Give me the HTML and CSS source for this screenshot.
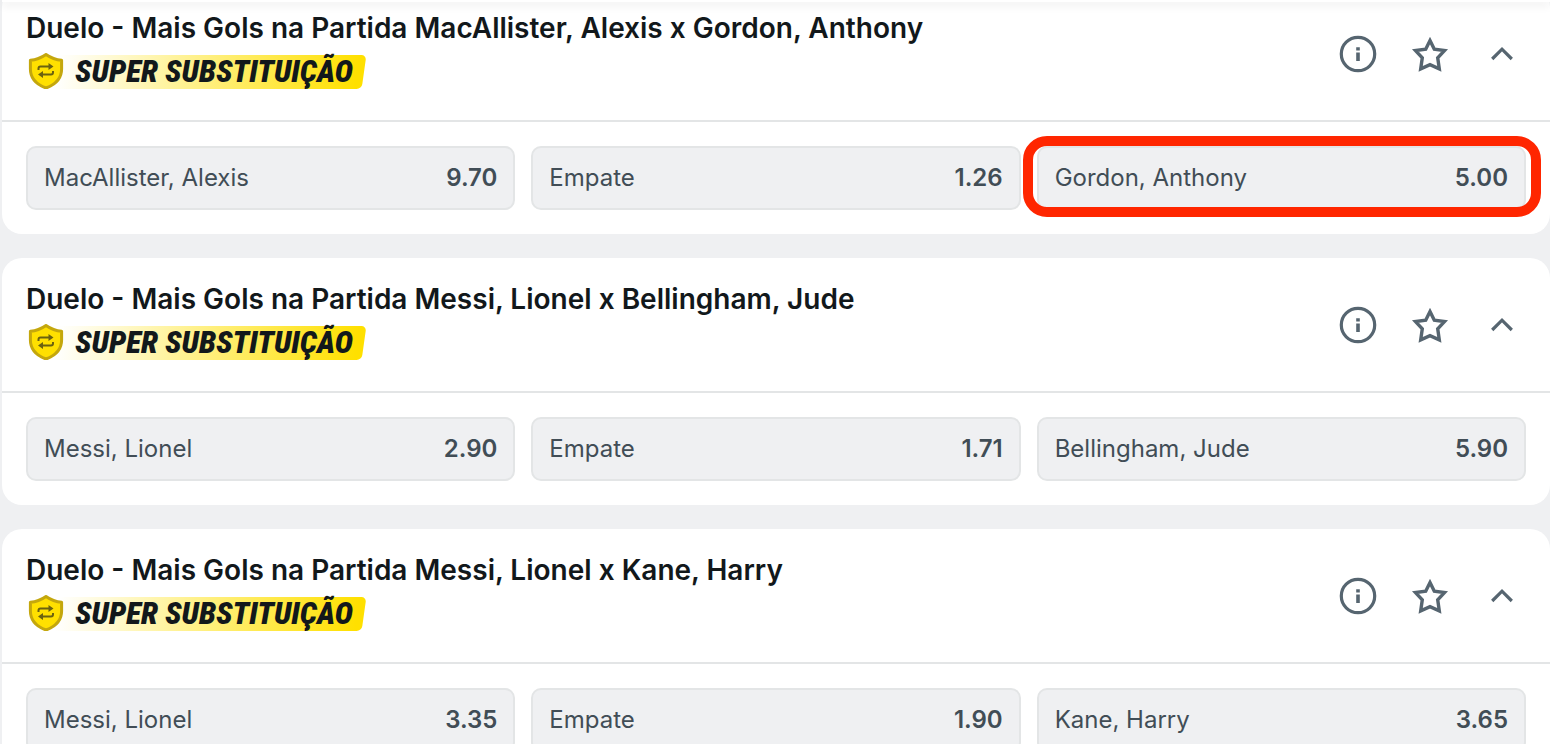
FILE: index.html
```
<!DOCTYPE html>
<html lang="pt-BR">
<head>
  <meta charset="UTF-8">
  <meta name="viewport" content="width=device-width, initial-scale=1.0">
  <title>Duelos - Super Substituição</title>
  <link rel="stylesheet" href="styles.css">
</head>
<body>
  <!-- shared icons -->
  <svg class="sprite" aria-hidden="true">
    <symbol id="icon-shield" viewBox="0 0 36 36">
      <path d="M18 1.500C14 4.300 8.500 6.800 2.400 7.200V16C2.400 25.500 8.500 31.500 18 35C27.500 31.500 33.600 25.500 33.600 16V7.200C27.500 6.800 22 4.300 18 1.500Z" fill="#ffe000" stroke="#c4a70d" stroke-width="3" stroke-linejoin="round"/>
      <path d="M10.500 17V15.500Q10.500 13.500 12.500 13.500H21M25 18V19.500Q25 21.500 23 21.500H14.500" fill="none" stroke="#6b6210" stroke-width="2"/>
      <path d="M20.500 10L25.500 13.500L20.500 17ZM15 18L10 21.500L15 25Z" fill="#6b6210"/>
    </symbol>
    <symbol id="icon-info" viewBox="0 0 40 40">
      <circle cx="20" cy="20" r="16.700" fill="none" stroke="#566570" stroke-width="3.200"/>
      <path d="M18.200 13.200H21.800V16.400H18.200ZM18.200 18.400H21.800V27H18.200Z" fill="#566570"/>
    </symbol>
    <symbol id="icon-star" viewBox="0 0 40 40">
      <path d="M20 6.500L24.300 15.300L34.500 16.600L27.700 23.800L29.300 34.800L20 30.600L10.700 34.800L12.300 23.800L5.500 16.600L15.700 15.300Z" fill="none" stroke="#566570" stroke-width="3.400"/>
    </symbol>
    <symbol id="icon-chevron" viewBox="0 0 40 40">
      <path d="M10.200 25L20 15.200L29.800 25" fill="none" stroke="#566570" stroke-width="3.200"/>
    </symbol>
  </svg>

  <div class="top-bar"></div>

  <main class="markets">
    <section class="card">
      <header class="card-header">
        <div class="card-info">
          <h2 class="card-title">Duelo - Mais Gols na Partida MacAllister, Alexis x Gordon, Anthony</h2>
          <div class="promo">
            <svg class="promo-icon"><use href="#icon-shield"/></svg>
            <span class="promo-text">SUPER SUBSTITUIÇÃO</span>
          </div>
        </div>
        <div class="actions">
          <button type="button" class="icon-btn" aria-label="Informações"><svg><use href="#icon-info"/></svg></button>
          <button type="button" class="icon-btn" aria-label="Favorito"><svg><use href="#icon-star"/></svg></button>
          <button type="button" class="icon-btn" aria-label="Recolher"><svg><use href="#icon-chevron"/></svg></button>
        </div>
      </header>
      <div class="odds">
        <button type="button" class="odd"><span>MacAllister, Alexis</span><span class="price">9.70</span></button>
        <button type="button" class="odd"><span>Empate</span><span class="price">1.26</span></button>
        <button type="button" class="odd highlighted"><span>Gordon, Anthony</span><span class="price">5.00</span></button>
      </div>
    </section>

    <section class="card">
      <header class="card-header">
        <div class="card-info">
          <h2 class="card-title">Duelo - Mais Gols na Partida Messi, Lionel x Bellingham, Jude</h2>
          <div class="promo">
            <svg class="promo-icon"><use href="#icon-shield"/></svg>
            <span class="promo-text">SUPER SUBSTITUIÇÃO</span>
          </div>
        </div>
        <div class="actions">
          <button type="button" class="icon-btn" aria-label="Informações"><svg><use href="#icon-info"/></svg></button>
          <button type="button" class="icon-btn" aria-label="Favorito"><svg><use href="#icon-star"/></svg></button>
          <button type="button" class="icon-btn" aria-label="Recolher"><svg><use href="#icon-chevron"/></svg></button>
        </div>
      </header>
      <div class="odds">
        <button type="button" class="odd"><span>Messi, Lionel</span><span class="price">2.90</span></button>
        <button type="button" class="odd"><span>Empate</span><span class="price">1.71</span></button>
        <button type="button" class="odd"><span>Bellingham, Jude</span><span class="price">5.90</span></button>
      </div>
    </section>

    <section class="card">
      <header class="card-header">
        <div class="card-info">
          <h2 class="card-title">Duelo - Mais Gols na Partida Messi, Lionel x Kane, Harry</h2>
          <div class="promo">
            <svg class="promo-icon"><use href="#icon-shield"/></svg>
            <span class="promo-text">SUPER SUBSTITUIÇÃO</span>
          </div>
        </div>
        <div class="actions">
          <button type="button" class="icon-btn" aria-label="Informações"><svg><use href="#icon-info"/></svg></button>
          <button type="button" class="icon-btn" aria-label="Favorito"><svg><use href="#icon-star"/></svg></button>
          <button type="button" class="icon-btn" aria-label="Recolher"><svg><use href="#icon-chevron"/></svg></button>
        </div>
      </header>
      <div class="odds">
        <button type="button" class="odd"><span>Messi, Lionel</span><span class="price">3.35</span></button>
        <button type="button" class="odd"><span>Empate</span><span class="price">1.90</span></button>
        <button type="button" class="odd"><span>Kane, Harry</span><span class="price">3.65</span></button>
      </div>
    </section>
  </main>
</body>
</html>
```

FILE: styles.css
```
* {
  box-sizing: border-box;
}
body {
  margin: 0;
  height: 100vh;
  overflow: hidden;
  background: #eff0f2;
  font-family: Inter, "Liberation Sans", sans-serif;
  color: #12181b;
}
.sprite {
  display: none;
}
.top-bar {
  position: fixed;
  top: 0;
  left: 2px;
  right: 0;
  height: 2px;
  background: #fff;
  box-shadow: 0 2px 10px rgba(0, 0, 0, 0.2);
  z-index: 2;
}
.markets {
  display: flex;
  flex-direction: column;
  gap: 24px;
  margin-top: -13px;
  padding-left: 2px;
}
.card {
  background: #fff;
  border-radius: 20px;
}
.card-header {
  display: flex;
  justify-content: space-between;
  align-items: center;
  padding: 24px 24px 31px;
  border-bottom: 2px solid #e3e5e6;
}
.card-title {
  margin: 0 0 8px;
  font-size: 28px;
  line-height: 34px;
  font-weight: 600;
}
.promo {
  position: relative;
  display: flex;
  align-items: center;
  width: fit-content;
  height: 36px;
  padding-right: 13px;
  z-index: 0;
}
/* slanted yellow ribbon behind the label */
.promo::before {
  content: "";
  position: absolute;
  inset: 2px 2px 0 4px;
  border-radius: 5px;
  background: linear-gradient(to right, #fff 8%, #ffe000 98%);
  transform: skewX(-8deg);
  z-index: -1;
}
.promo-icon {
  width: 36px;
  height: 36px;
  margin: 0 11px 0 2px;
}
.promo-text {
  padding-top: 2px;
  font-family: "Roboto Condensed", "Open Sans Condensed", "Liberation Sans Narrow", "DejaVu Sans Condensed", sans-serif;
  font-size: 31px;
  line-height: 38px;
  font-style: italic;
  font-weight: 900;
}
.actions {
  display: flex;
  gap: 32px;
  padding-right: 4px;
  padding-top: 7px;
}
.icon-btn {
  width: 40px;
  height: 40px;
  padding: 0;
  border: none;
  background: none;
  cursor: pointer;
}
.icon-btn svg {
  display: block;
  width: 40px;
  height: 40px;
}
.odds {
  display: grid;
  grid-template-columns: repeat(3, 1fr);
  gap: 16px;
  padding: 24px;
}
.odd {
  position: relative;
  display: flex;
  justify-content: space-between;
  align-items: center;
  height: 64px;
  padding: 0 16px 2px;
  border: 2px solid #e3e5e6;
  border-radius: 10px;
  background: #eff0f2;
  color: #414d56;
  font-family: inherit;
  font-size: 24px;
  cursor: pointer;
}
.price {
  font-weight: 600;
}
.highlighted::after {
  content: "";
  position: absolute;
  inset: -12px -17px -9px -16px;
  border: 10px solid #ff2600;
  border-radius: 24px;
}
```
